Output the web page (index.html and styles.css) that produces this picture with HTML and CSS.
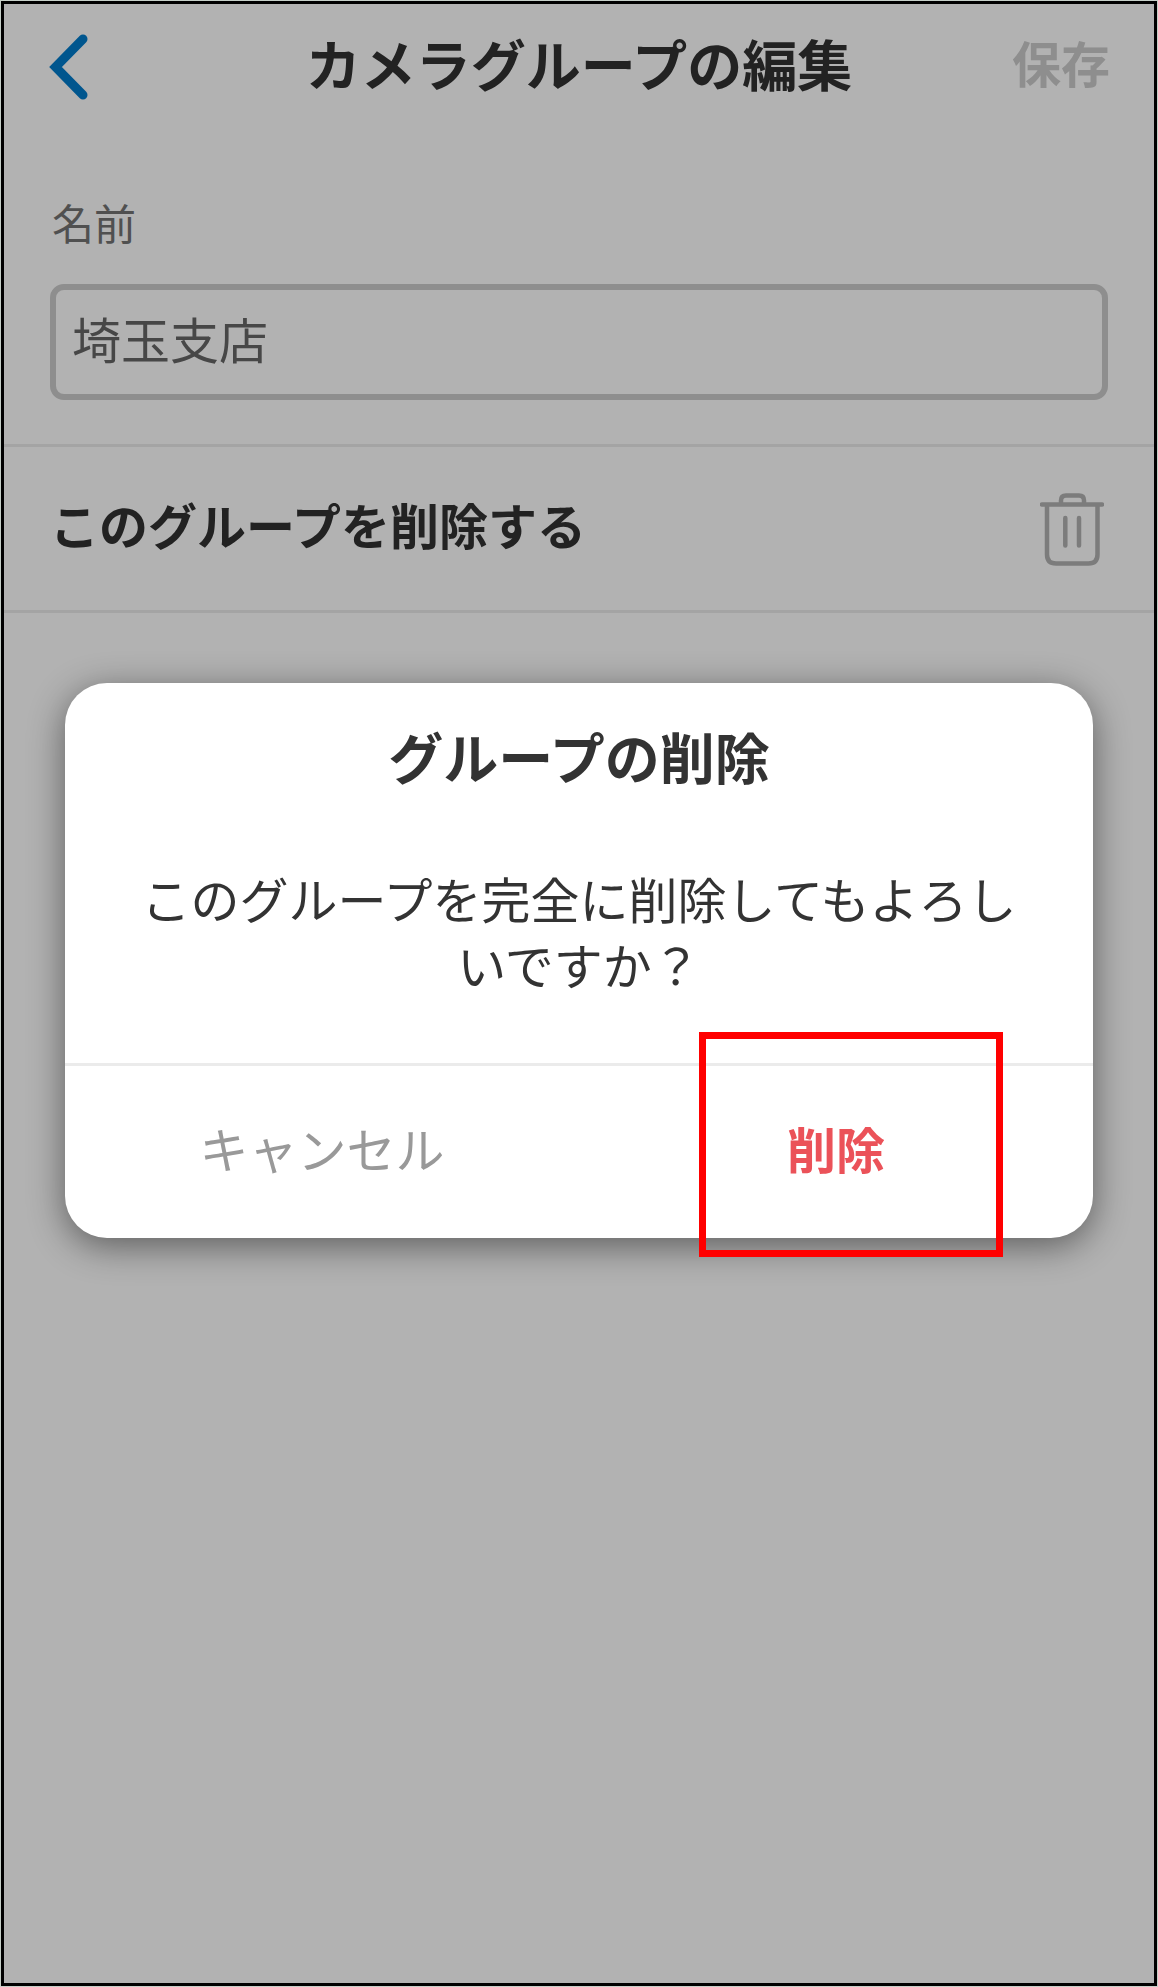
FILE: index.html
```html
<!DOCTYPE html>
<html lang="ja">
<head>
<meta charset="utf-8">
<meta name="viewport" content="width=device-width, initial-scale=1">
<title>カメラグループの編集</title>
<link rel="stylesheet" href="styles.css">
</head>
<body>
<div class="screen">
  <header class="topbar">
    <button class="back" type="button" aria-label="戻る">
      <svg class="back-icon" viewBox="0 0 40 66" aria-hidden="true"><path d="M35 5 7.500 33 35 61"/></svg>
    </button>
    <h1 class="title">カメラグループの編集</h1>
    <button class="save" type="button">保存</button>
  </header>
  <main>
    <div class="field">
      <label class="label" for="name">名前</label>
      <input class="input" id="name" type="text" value="埼玉支店">
    </div>
    <button class="delete-row" type="button">
      <span class="delete-text">このグループを削除する</span>
      <svg class="trash-icon" viewBox="0 0 64 74" aria-hidden="true"><path d="M2 12.500h60M21 12V8.500q0-5 5-5h13q5 0 5 5V12M7 14v48.500q0 9 9 9h32.500q9 0 9-9V14M25.300 26v27.500M39 26v27.500"/></svg>
    </button>
  </main>
  <div class="overlay">
    <section class="dialog" role="dialog" aria-modal="true" aria-labelledby="dialog-title">
      <div class="dialog-body">
        <h2 class="dialog-title" id="dialog-title">グループの削除</h2>
        <p class="message">このグループを完全に削除してもよろしいですか？</p>
      </div>
      <div class="actions">
        <button class="cancel" type="button">キャンセル</button>
        <button class="confirm" type="button">削除</button>
      </div>
      <div class="highlight"></div>
    </section>
  </div>
</div>
</body>
</html>
```
FILE: styles.css
```css
* { box-sizing: border-box; }
body {
  margin: 0;
  padding: 1px;
  background: #c6cfc8;
  font-family: "Noto Sans CJK JP", sans-serif;
  color: #222;
}
button {
  margin: 0;
  padding: 0;
  border: 0;
  background: none;
  font: inherit;
  color: inherit;
}
.screen {
  position: relative;
  min-height: calc(100vh - 2px);
  border: 3px solid #000;
  background: #b2b2b2;
}
.topbar {
  display: grid;
  grid-template-columns: 1fr auto 1fr;
  align-items: center;
  height: 126px;
  padding: 0 44px;
}
.back { justify-self: start; height: 66px; }
.back-icon {
  display: block;
  width: 40px;
  height: 66px;
  fill: none;
  stroke: #00568e;
  stroke-width: 9;
  stroke-linecap: round;
}
.title { margin: 0; padding-bottom: 10px; font-size: 55px; line-height: 80px; font-weight: 700; }
.save { justify-self: end; padding-bottom: 10px; font-size: 49px; line-height: 72px; font-weight: 700; color: #8e8e8e; }
.field { padding: 60px 46px 44px; }
.label { display: block; margin-bottom: 30px; padding-left: 2px; font-size: 42px; line-height: 64px; color: #505050; }
.input {
  display: block;
  width: 100%;
  height: 116px;
  padding: 0 16px 10px;
  border: 6px solid #8e8e8e;
  border-radius: 14px;
  background: #b2b2b2;
  font: inherit;
  font-size: 49px;
  color: #474747;
}
.delete-row {
  display: flex;
  justify-content: space-between;
  align-items: center;
  width: 100%;
  height: 169px;
  padding: 0 50px 0 46px;
  border: solid #a4a4a4;
  border-width: 3px 0;
  font-size: 49px;
  font-weight: 700;
}
.delete-text { padding-bottom: 10px; }
.trash-icon { width: 64px; height: 74px; fill: none; stroke: #7c7c7c; stroke-width: 4.5; stroke-linecap: round; }
.overlay {
  position: absolute;
  inset: 0;
  display: flex;
  justify-content: center;
  align-items: flex-start;
  padding: 679px 61px 0;
}
.dialog {
  position: relative;
  width: 100%;
  border-radius: 42px;
  background: #fff;
  box-shadow: 0 8px 36px rgba(0, 0, 0, .48);
  color: #333;
  text-align: center;
}
.dialog-body { padding: 32px 72px 66px; }
.dialog-title { margin: 0 0 70px; font-size: 55px; line-height: 80px; font-weight: 700; }
.message { margin: 0; font-size: 49px; line-height: 66px; }
.actions {
  display: grid;
  grid-template-columns: 1fr 1fr;
  height: 175px;
  border-top: 3px solid #ebebeb;
  font-size: 49px;
}
.cancel, .confirm { padding-bottom: 10px; }
.cancel { color: #999; }
.confirm { color: #eb5259; font-weight: 700; }
.highlight {
  position: absolute;
  right: 90px;
  bottom: -19px;
  width: 304px;
  height: 225px;
  border: 7px solid #f00;
  pointer-events: none;
}
```
